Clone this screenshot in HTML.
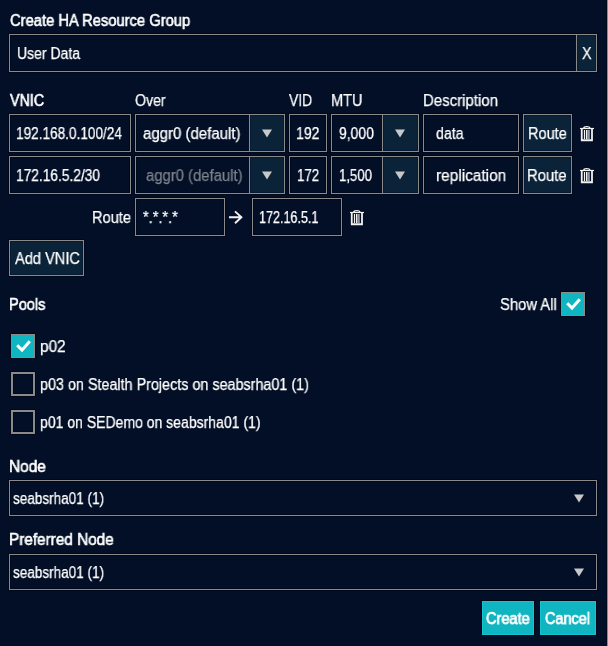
<!DOCTYPE html>
<html><head><meta charset="utf-8">
<style>
html,body{margin:0;padding:0;}
body{width:608px;height:646px;background:#020f26;position:relative;overflow:hidden;font-family:"Liberation Sans",sans-serif;color:#ffffff;}
.a{position:absolute;}
.t{position:absolute;white-space:pre;will-change:transform;font-size:16px;line-height:16px;transform-origin:0 0;}
</style></head><body>
<div class="a" style="left:9px;top:34px;width:588px;height:38px;border:1px solid #8c8a88;background:#020f26;box-sizing:border-box;box-shadow:0 0 0 1px #00081a,inset 0 0 0 1px #000a1e;"></div>
<div class="a" style="left:576px;top:34px;width:21px;height:38px;border:1px solid #8c8a88;background:#0a2339;box-sizing:border-box;box-shadow:inset 0 0 0 1px #061b31;"></div>
<div class="a" style="left:9px;top:114px;width:122px;height:38px;border:1px solid #8c8a88;background:#020f26;box-sizing:border-box;box-shadow:0 0 0 1px #00081a,inset 0 0 0 1px #000a1e;"></div>
<div class="a" style="left:135px;top:114px;width:150px;height:38px;border:1px solid #8c8a88;background:#020f26;box-sizing:border-box;box-shadow:0 0 0 1px #00081a,inset 0 0 0 1px #000a1e;"></div>
<div class="a" style="left:249px;top:114px;width:36px;height:38px;border:1px solid #8c8a88;background:#0a2339;box-sizing:border-box;box-shadow:inset 0 0 0 1px #061b31;"></div>
<svg class="a" style="left:261px;top:129px" width="12" height="9" viewBox="0 0 12 9"><path d="M1 0.5H11L6 8.5Z" fill="#c8c8c8"/></svg>
<div class="a" style="left:289px;top:114px;width:38px;height:38px;border:1px solid #8c8a88;background:#020f26;box-sizing:border-box;box-shadow:0 0 0 1px #00081a,inset 0 0 0 1px #000a1e;"></div>
<div class="a" style="left:331px;top:114px;width:88px;height:38px;border:1px solid #8c8a88;background:#020f26;box-sizing:border-box;box-shadow:0 0 0 1px #00081a,inset 0 0 0 1px #000a1e;"></div>
<div class="a" style="left:382px;top:114px;width:37px;height:38px;border:1px solid #8c8a88;background:#0a2339;box-sizing:border-box;box-shadow:inset 0 0 0 1px #061b31;"></div>
<svg class="a" style="left:394px;top:129px" width="12" height="9" viewBox="0 0 12 9"><path d="M1 0.5H11L6 8.5Z" fill="#c8c8c8"/></svg>
<div class="a" style="left:423px;top:114px;width:96px;height:38px;border:1px solid #8c8a88;background:#020f26;box-sizing:border-box;box-shadow:0 0 0 1px #00081a,inset 0 0 0 1px #000a1e;"></div>
<div class="a" style="left:523px;top:114px;width:49px;height:38px;border:1px solid #8c8a88;background:#0a2339;box-sizing:border-box;box-shadow:0 0 0 1px #00081a,inset 0 0 0 1px #061b31;"></div>
<svg class="a" style="left:579px;top:125px" width="16" height="17" viewBox="0 0 16 17"><path d="M1 3.5H15" stroke="#f2f2f2" stroke-width="1.2"/><path d="M4.7 3.4C4.7 1.1 11 1.1 11 3.4" stroke="#f2f2f2" stroke-width="1.3" fill="none"/><path d="M2.75 3.8V15.25H13V3.8" stroke="#f2f2f2" stroke-width="1.8" fill="none"/><path d="M5.5 5V14M7.6 5V14" stroke="#f2f2f2" stroke-width="1.2"/><rect x="8.3" y="5" width="2.5" height="9" fill="#f2f2f2" fill-opacity="0.6"/></svg>
<div class="a" style="left:9px;top:156px;width:122px;height:38px;border:1px solid #8c8a88;background:#020f26;box-sizing:border-box;box-shadow:0 0 0 1px #00081a,inset 0 0 0 1px #000a1e;"></div>
<div class="a" style="left:135px;top:156px;width:150px;height:38px;border:1px solid #8c8a88;background:#020f26;box-sizing:border-box;box-shadow:0 0 0 1px #00081a,inset 0 0 0 1px #000a1e;"></div>
<div class="a" style="left:249px;top:156px;width:36px;height:38px;border:1px solid #8c8a88;background:#0a2339;box-sizing:border-box;box-shadow:inset 0 0 0 1px #061b31;"></div>
<svg class="a" style="left:261px;top:171px" width="12" height="9" viewBox="0 0 12 9"><path d="M1 0.5H11L6 8.5Z" fill="#c8c8c8"/></svg>
<div class="a" style="left:289px;top:156px;width:38px;height:38px;border:1px solid #8c8a88;background:#020f26;box-sizing:border-box;box-shadow:0 0 0 1px #00081a,inset 0 0 0 1px #000a1e;"></div>
<div class="a" style="left:331px;top:156px;width:88px;height:38px;border:1px solid #8c8a88;background:#020f26;box-sizing:border-box;box-shadow:0 0 0 1px #00081a,inset 0 0 0 1px #000a1e;"></div>
<div class="a" style="left:382px;top:156px;width:37px;height:38px;border:1px solid #8c8a88;background:#0a2339;box-sizing:border-box;box-shadow:inset 0 0 0 1px #061b31;"></div>
<svg class="a" style="left:394px;top:171px" width="12" height="9" viewBox="0 0 12 9"><path d="M1 0.5H11L6 8.5Z" fill="#c8c8c8"/></svg>
<div class="a" style="left:423px;top:156px;width:96px;height:38px;border:1px solid #8c8a88;background:#020f26;box-sizing:border-box;box-shadow:0 0 0 1px #00081a,inset 0 0 0 1px #000a1e;"></div>
<div class="a" style="left:523px;top:156px;width:49px;height:38px;border:1px solid #8c8a88;background:#0a2339;box-sizing:border-box;box-shadow:0 0 0 1px #00081a,inset 0 0 0 1px #061b31;"></div>
<svg class="a" style="left:579px;top:167px" width="16" height="17" viewBox="0 0 16 17"><path d="M1 3.5H15" stroke="#f2f2f2" stroke-width="1.2"/><path d="M4.7 3.4C4.7 1.1 11 1.1 11 3.4" stroke="#f2f2f2" stroke-width="1.3" fill="none"/><path d="M2.75 3.8V15.25H13V3.8" stroke="#f2f2f2" stroke-width="1.8" fill="none"/><path d="M5.5 5V14M7.6 5V14" stroke="#f2f2f2" stroke-width="1.2"/><rect x="8.3" y="5" width="2.5" height="9" fill="#f2f2f2" fill-opacity="0.6"/></svg>
<div class="a" style="left:135px;top:198px;width:90px;height:38px;border:1px solid #8c8a88;background:#020f26;box-sizing:border-box;box-shadow:0 0 0 1px #00081a,inset 0 0 0 1px #000a1e;"></div>
<div class="a" style="left:252px;top:198px;width:90px;height:38px;border:1px solid #8c8a88;background:#020f26;box-sizing:border-box;box-shadow:0 0 0 1px #00081a,inset 0 0 0 1px #000a1e;"></div>
<svg class="a" style="left:228px;top:210px" width="16" height="15" viewBox="0 0 16 15"><path d="M1 7.3H14M7 1.4L13.4 7.3L7 13.2" stroke="#f2f2f2" stroke-width="1.9" fill="none"/></svg>
<svg class="a" style="left:349px;top:209px" width="16" height="17" viewBox="0 0 16 17"><path d="M1 3.5H15" stroke="#f2f2f2" stroke-width="1.2"/><path d="M4.7 3.4C4.7 1.1 11 1.1 11 3.4" stroke="#f2f2f2" stroke-width="1.3" fill="none"/><path d="M2.75 3.8V15.25H13V3.8" stroke="#f2f2f2" stroke-width="1.8" fill="none"/><path d="M5.5 5V14M7.6 5V14" stroke="#f2f2f2" stroke-width="1.2"/><rect x="8.3" y="5" width="2.5" height="9" fill="#f2f2f2" fill-opacity="0.6"/></svg>
<div class="a" style="left:9px;top:240px;width:75px;height:36px;border:1px solid #8c8a88;background:#0a2339;box-sizing:border-box;box-shadow:0 0 0 1px #00081a,inset 0 0 0 1px #061b31;"></div>
<div class="a" style="left:561px;top:292px;width:24px;height:24px;border:1px solid #8c8a88;background:#0fb6c2;box-sizing:border-box;box-shadow:0 0 0 1px #00081a;"></div>
<svg class="a" style="left:561px;top:292px" width="24" height="24" viewBox="0 0 24 24"><path d="M6.2 11.3L11 16L18.8 7.3" stroke="#fff" stroke-width="3" fill="none"/></svg>
<div class="a" style="left:11px;top:334px;width:24px;height:24px;border:1px solid #8c8a88;background:#0fb6c2;box-sizing:border-box;box-shadow:0 0 0 1px #00081a;"></div>
<svg class="a" style="left:11px;top:334px" width="24" height="24" viewBox="0 0 24 24"><path d="M6.2 11.3L11 16L18.8 7.3" stroke="#fff" stroke-width="3" fill="none"/></svg>
<div class="a" style="left:11px;top:372px;width:24px;height:24px;border:2px solid #8c8a88;background:#020f26;box-sizing:border-box;box-shadow:0 0 0 1px #00081a,inset 0 0 0 1px #000a1e;"></div>
<div class="a" style="left:11px;top:410px;width:24px;height:24px;border:2px solid #8c8a88;background:#020f26;box-sizing:border-box;box-shadow:0 0 0 1px #00081a,inset 0 0 0 1px #000a1e;"></div>
<div class="a" style="left:9px;top:480px;width:588px;height:36px;border:1px solid #8c8a88;background:#020f26;box-sizing:border-box;box-shadow:0 0 0 1px #00081a,inset 0 0 0 1px #000a1e;"></div>
<svg class="a" style="left:573px;top:494px" width="12" height="9" viewBox="0 0 12 9"><path d="M1 0.5H11L6 8.5Z" fill="#c8c8c8"/></svg>
<div class="a" style="left:9px;top:554px;width:588px;height:36px;border:1px solid #8c8a88;background:#020f26;box-sizing:border-box;box-shadow:0 0 0 1px #00081a,inset 0 0 0 1px #000a1e;"></div>
<svg class="a" style="left:573px;top:568px" width="12" height="9" viewBox="0 0 12 9"><path d="M1 0.5H11L6 8.5Z" fill="#c8c8c8"/></svg>
<div class="a" style="left:482px;top:601px;width:52px;height:34px;background:#0fb6c2;box-shadow:0 0 0 1px #000616,inset 0 0 0 1px #14c4d0"></div>
<div class="a" style="left:540px;top:601px;width:56px;height:34px;background:#0fb6c2;box-shadow:0 0 0 1px #000616,inset 0 0 0 1px #14c4d0"></div>
<div class="a" style="left:606px;top:0px;width:1px;height:646px;background:#000a1c;"></div>
<div class="a" style="left:607px;top:0px;width:1px;height:646px;background:#8c8c8c;"></div>
<div class="t" style="left:9.50px;top:13px;-webkit-text-stroke:0.6px #fff;transform:scaleX(0.921);">Create HA Resource Group</div>
<div class="t" style="left:17.12px;top:46px;-webkit-text-stroke:0.25px #fff;transform:scaleX(0.875);">User Data</div>
<div class="t" style="left:582.00px;top:46px;-webkit-text-stroke:0.25px #fff;transform:scaleX(0.900);">X</div>
<div class="t" style="left:9.50px;top:93px;-webkit-text-stroke:0.6px #fff;transform:scaleX(0.889);">VNIC</div>
<div class="t" style="left:135.30px;top:93px;-webkit-text-stroke:0.25px #fff;transform:scaleX(0.883);">Over</div>
<div class="t" style="left:289.40px;top:93px;-webkit-text-stroke:0.25px #fff;transform:scaleX(0.869);">VID</div>
<div class="t" style="left:330.89px;top:93px;-webkit-text-stroke:0.25px #fff;transform:scaleX(0.912);">MTU</div>
<div class="t" style="left:422.86px;top:93px;-webkit-text-stroke:0.25px #fff;transform:scaleX(0.937);">Description</div>
<div class="t" style="left:16.45px;top:126px;-webkit-text-stroke:0.25px #fff;transform:scaleX(0.850);">192.168.0.100/24</div>
<div class="t" style="left:143.20px;top:126px;-webkit-text-stroke:0.25px #fff;transform:scaleX(0.937);">aggr0 (default)</div>
<div class="t" style="left:296.12px;top:126px;-webkit-text-stroke:0.25px #fff;transform:scaleX(0.876);">192</div>
<div class="t" style="left:339.20px;top:126px;-webkit-text-stroke:0.25px #fff;transform:scaleX(0.870);">9,000</div>
<div class="t" style="left:436.00px;top:126px;-webkit-text-stroke:0.25px #fff;transform:scaleX(0.887);">data</div>
<div class="t" style="left:527.69px;top:126px;-webkit-text-stroke:0.25px #fff;transform:scaleX(0.910);">Route</div>
<div class="t" style="left:15.94px;top:168px;-webkit-text-stroke:0.25px #fff;transform:scaleX(0.858);">172.16.5.2/30</div>
<div class="t" style="left:145.50px;top:168px;-webkit-text-stroke:0.25px #7d828a;color:#7d828a;transform:scaleX(0.928);">aggr0 (default)</div>
<div class="t" style="left:296.57px;top:168px;-webkit-text-stroke:0.25px #fff;transform:scaleX(0.828);">172</div>
<div class="t" style="left:338.78px;top:168px;-webkit-text-stroke:0.25px #fff;transform:scaleX(0.823);">1,500</div>
<div class="t" style="left:435.84px;top:168px;-webkit-text-stroke:0.25px #fff;transform:scaleX(0.963);">replication</div>
<div class="t" style="left:527.17px;top:168px;-webkit-text-stroke:0.25px #fff;transform:scaleX(0.927);">Route</div>
<div class="t" style="left:91.59px;top:210px;-webkit-text-stroke:0.25px #fff;transform:scaleX(0.915);">Route</div>
<div class="t" style="left:142.80px;top:210px;-webkit-text-stroke:0.25px #fff;transform:scaleX(0.911);">*.*.*.*</div>
<div class="t" style="left:259.41px;top:210px;-webkit-text-stroke:0.25px #fff;transform:scaleX(0.785);">172.16.5.1</div>
<div class="t" style="left:14.50px;top:251px;-webkit-text-stroke:0.25px #fff;transform:scaleX(0.913);">Add VNIC</div>
<div class="t" style="left:8.99px;top:297px;-webkit-text-stroke:0.6px #fff;transform:scaleX(0.910);">Pools</div>
<div class="t" style="left:499.57px;top:297px;-webkit-text-stroke:0.25px #fff;transform:scaleX(0.925);">Show All</div>
<div class="t" style="left:39.54px;top:339px;-webkit-text-stroke:0.25px #fff;transform:scaleX(0.960);">p02</div>
<div class="t" style="left:39.90px;top:377px;-webkit-text-stroke:0.25px #fff;transform:scaleX(0.897);">p03 on Stealth Projects on seabsrha01 (1)</div>
<div class="t" style="left:40.02px;top:415px;-webkit-text-stroke:0.25px #fff;transform:scaleX(0.876);">p01 on SEDemo on seabsrha01 (1)</div>
<div class="t" style="left:8.94px;top:459px;-webkit-text-stroke:0.6px #fff;transform:scaleX(0.965);">Node</div>
<div class="t" style="left:13.10px;top:491px;-webkit-text-stroke:0.25px #fff;transform:scaleX(0.846);">seabsrha01 (1)</div>
<div class="t" style="left:8.94px;top:532px;-webkit-text-stroke:0.6px #fff;transform:scaleX(0.957);">Preferred Node</div>
<div class="t" style="left:13.10px;top:565px;-webkit-text-stroke:0.25px #fff;transform:scaleX(0.846);">seabsrha01 (1)</div>
<div class="t" style="left:485.90px;top:611px;-webkit-text-stroke:0.75px #fff;transform:scaleX(0.908);">Create</div>
<div class="t" style="left:544.90px;top:611px;-webkit-text-stroke:0.75px #fff;transform:scaleX(0.904);">Cancel</div>
</body></html>
